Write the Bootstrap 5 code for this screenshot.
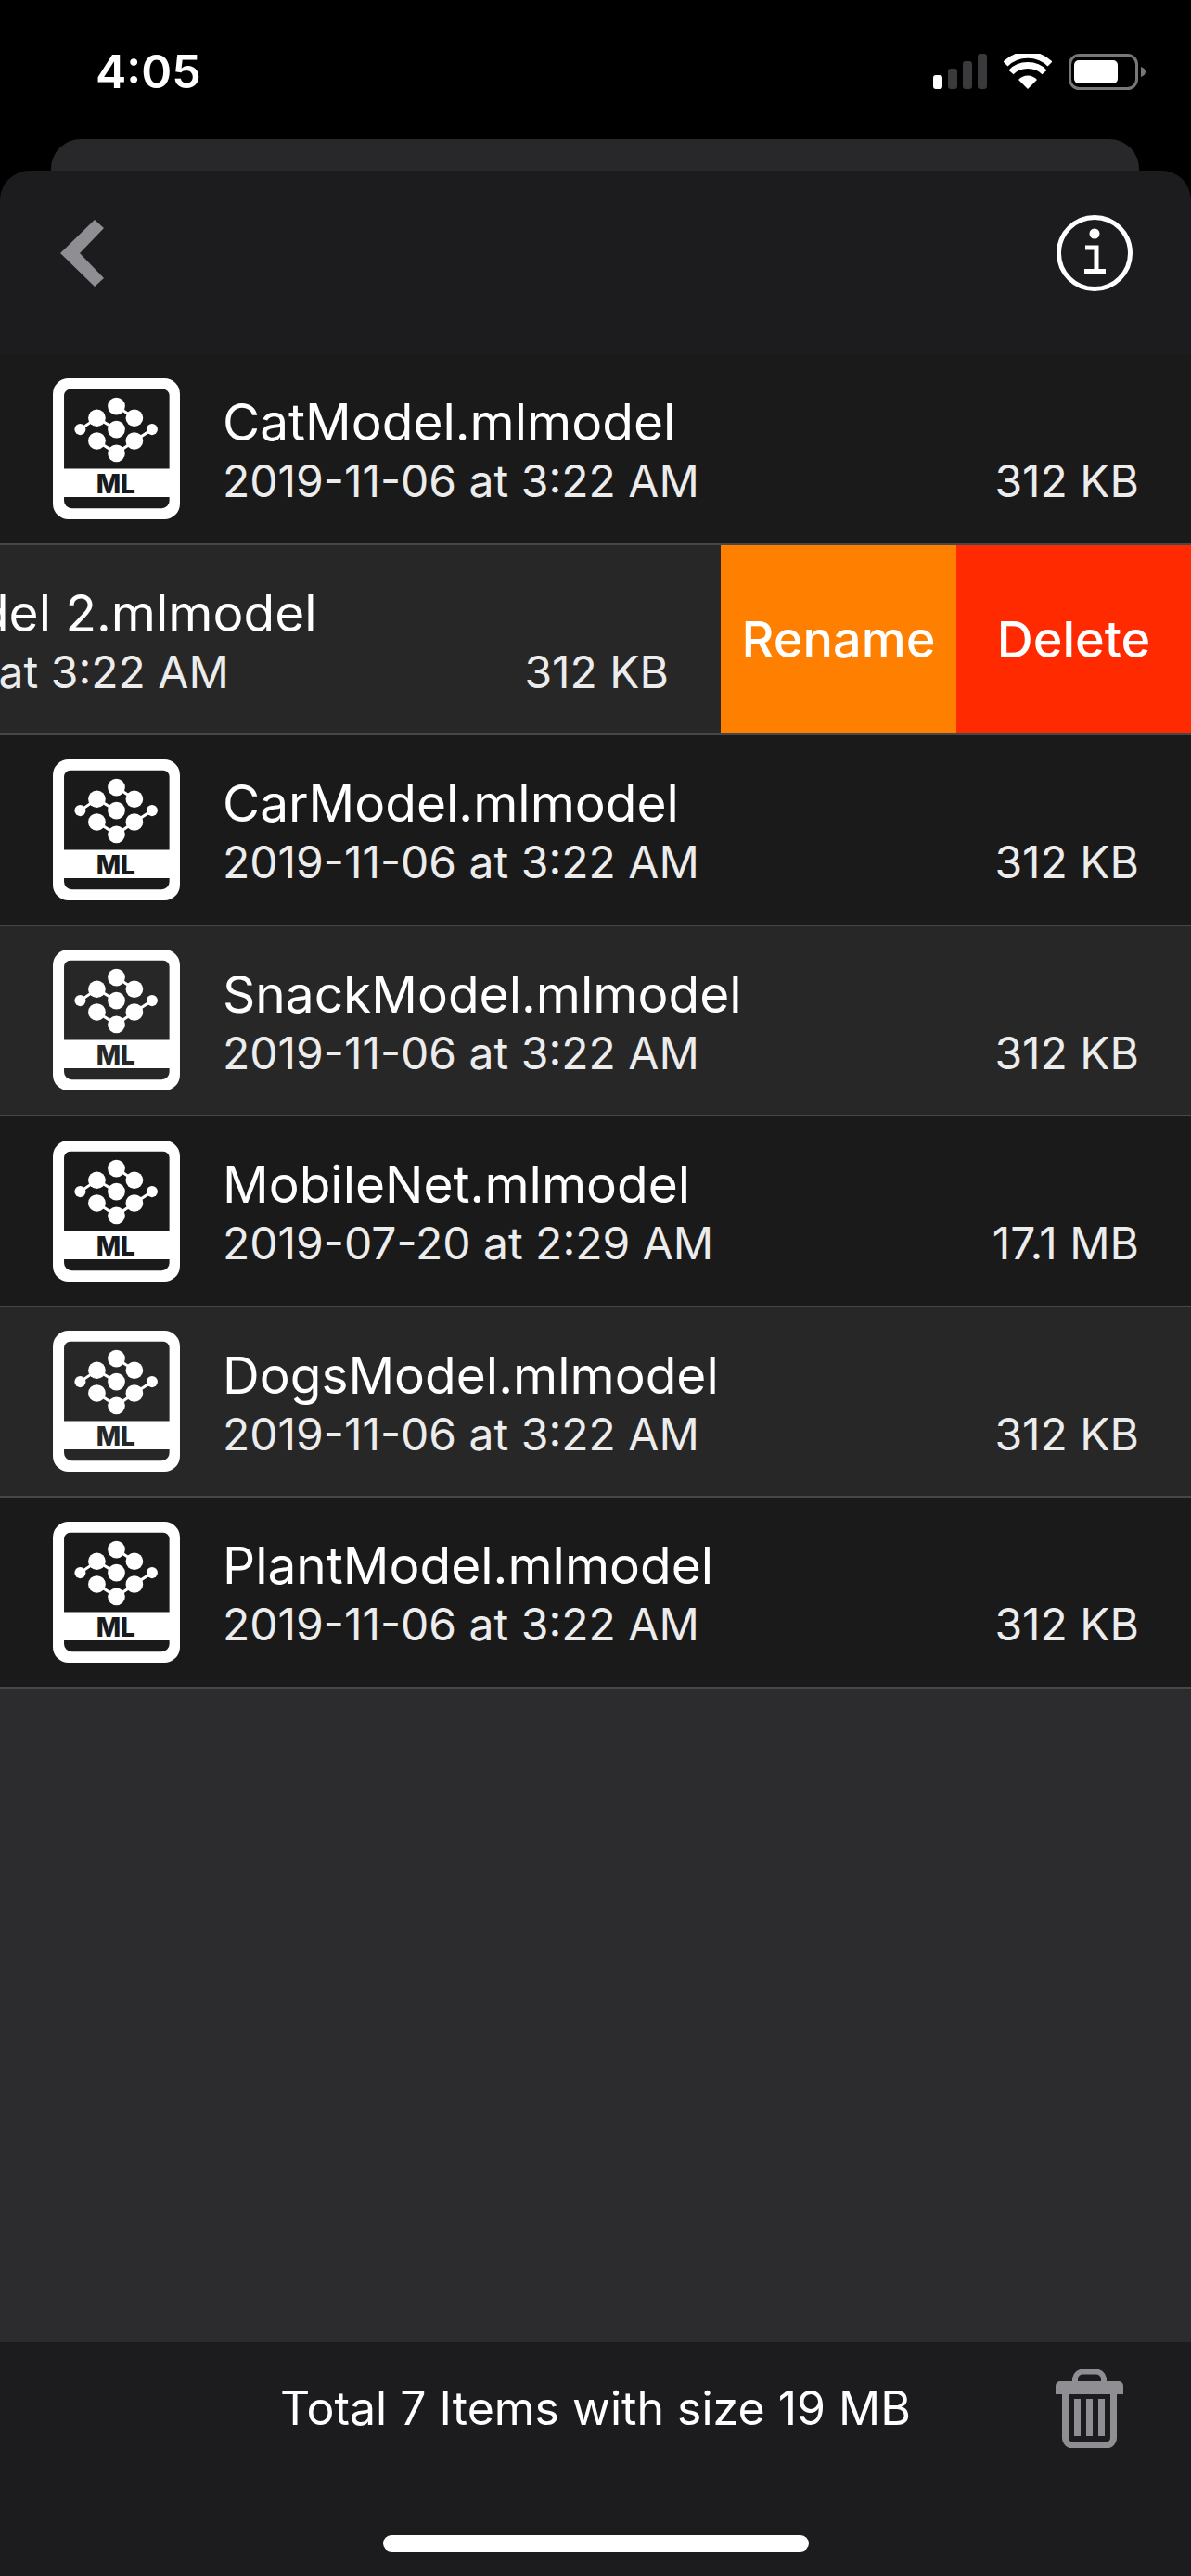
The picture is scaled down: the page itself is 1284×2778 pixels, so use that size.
<!DOCTYPE html>
<html lang="en">
<head>
  <meta charset="UTF-8" />
  <meta name="viewport" content="width=device-width, initial-scale=1.0"/>
  <title>Models</title>
  <link href="https://cdn.jsdelivr.net/npm/bootstrap@5.3.2/dist/css/bootstrap.min.css" rel="stylesheet">
  <style>
    html, body {
      height: 2778px;
      background: #000;
      color: #fff;
      font-family: Inter, "Liberation Sans", sans-serif;
      overflow: hidden;
    }
    .page-wrap { height: 2778px; }
    .status-row { height: 150px; padding: 58px 49px 0 103px; }
    .clock { font-size: 50px; font-weight: 600; line-height: 39px; }
    .status-icons { gap: 18px; }
    .back-sheet {
      height: 34px;
      margin: 0 56px 0 55px;
      background: #28282a;
      border-radius: 32px 32px 0 0;
    }
    .front-sheet { background: #1c1c1e; border-radius: 32px 32px 0 0; min-height: 0; }
    .sheet-head { height: 198px; padding: 0 62px 20px 65px; }
    .model-list { background: #2c2c2e; }
    .model-row {
      --row-bg: #1a1a1a;
      height: 205.5px;
      background: var(--row-bg);
      border-bottom: 2px solid #47474a;
      overflow: hidden;
    }
    .model-row.alt-row { --row-bg: #272727; }
    .row-main {
      width: 1284px;
      flex: none;
      padding: 0 56px 0 57px;
      gap: 46px;
    }
    .row-main.swiped { margin-left: -507px; }
    .ml-icon { width: 137px; height: 152px; flex: none; color: #fff; }
    .model-name { font-size: 55px; line-height: 61px; margin-top: 7px; }
    .model-meta { font-size: 48px; line-height: 61px; margin-top: 2px; color: #ececec; }
    .row-action {
      width: 254px;
      flex: none;
      font-size: 54px;
      font-weight: 500;
      color: #fff;
      border: 0;
      border-radius: 0;
      padding: 0;
    }
    .act-rename { background: #ff8000; }
    .act-delete { background: #ff2a00; width: 253px; }
    .foot-bar { height: 252px; padding-top: 29px; background: #1c1c1e; }
    .foot-row { display: grid; grid-template-columns: 1fr auto 1fr; height: 85px; padding-right: 73px; padding-left: 73px; }
    .foot-text { font-size: 50px; line-height: 85px; white-space: nowrap; }
    .home-bar { width: 459px; height: 18px; margin: 94px auto 0; border-radius: 9px; background: #fff; }
  </style>
</head>
<body>

  <svg width="0" height="0" class="position-absolute">
    <symbol id="mlGlyph" viewBox="0 0 410 455">
      <path fill="currentColor" fill-rule="evenodd" d="M50 0H360A50 50 0 0 1 410 50V405A50 50 0 0 1 360 455H50A50 50 0 0 1 0 405V50A50 50 0 0 1 50 0ZM56 35A20 20 0 0 0 36 55V292H376V55A20 20 0 0 0 356 35ZM36 383V395A25 25 0 0 0 61 420H351A25 25 0 0 0 376 395V383Z"/>
      <g fill="currentColor" stroke="none">
        <circle cx="205" cy="90" r="28"/>
        <circle cx="263" cy="128" r="28"/>
        <circle cx="142" cy="128" r="28"/>
        <circle cx="205" cy="165" r="28"/>
        <circle cx="142" cy="202" r="28"/>
        <circle cx="263" cy="202" r="28"/>
        <circle cx="205" cy="242" r="28"/>
        <circle cx="88" cy="165" r="18"/>
        <circle cx="320" cy="165" r="18"/>
      </g>
      <path fill="none" stroke="currentColor" stroke-width="9" d="M88 165 142 128 205 165M205 90 263 128M142 202 205 242 263 202 320 165"/>
      <text x="203" y="370" text-anchor="middle" font-family="Inter, 'Liberation Sans', sans-serif" font-size="84" font-weight="800" style="fill: var(--row-bg)">ML</text>
    </symbol>
  </svg>

  <div class="page-wrap d-flex flex-column">
    <div class="status-row d-flex justify-content-between align-items-start flex-shrink-0">
      <div class="clock">4:05</div>
      <div class="status-icons d-flex align-items-start">
        <svg width="58" height="38" viewBox="0 0 58 38">
          <rect x="0" y="23" width="10" height="15" rx="3" fill="#fff"/>
          <rect x="16" y="16" width="10" height="22" rx="3" fill="#3a3a3c"/>
          <rect x="32" y="8" width="10" height="30" rx="3" fill="#3a3a3c"/>
          <rect x="48" y="0" width="10" height="38" rx="3" fill="#3a3a3c"/>
        </svg>
        <svg width="52" height="38" viewBox="0 0 52 38">
          <path d="M26 38 16 28C21 22 31 22 36 28Z" fill="#fff"/>
          <path d="M8 20C17 10 35 10 44 20" fill="none" stroke="#fff" stroke-width="7"/>
          <path d="M2 11C15 -2 37 -2 50 11" fill="none" stroke="#fff" stroke-width="7"/>
        </svg>
        <svg width="83" height="39" viewBox="0 0 83 39">
          <rect x="1.5" y="1.5" width="72" height="36" rx="10" fill="none" stroke="#77777a" stroke-width="3"/>
          <rect x="6" y="7" width="47" height="25" rx="5" fill="#fff"/>
          <path d="M78 14C81 15 83 17 83 19.500C83 22 81 24 78 25Z" fill="#77777a"/>
        </svg>
      </div>
    </div>

    <div class="back-sheet flex-shrink-0"></div>

    <div class="front-sheet d-flex flex-column flex-grow-1">
      <div class="sheet-head d-flex justify-content-between align-items-center flex-shrink-0">
        <svg width="47" height="72" viewBox="0 0 47 72">
          <polygon points="37,0 47,9 21,36 47,63 37,72 0,36" fill="#8e8e93"/>
        </svg>
        <svg width="84" height="84" viewBox="0 0 84 84">
          <circle cx="42" cy="42" r="38.500" fill="none" stroke="#fff" stroke-width="5"/>
          <circle cx="42" cy="21" r="5.500" fill="#fff"/>
          <path d="M32 36H44V61M31 61.500H54" fill="none" stroke="#fff" stroke-width="5"/>
        </svg>
      </div>

      <div id="modelList" class="model-list list-group list-group-flush rounded-0 flex-grow-1"></div>

      <div class="foot-bar flex-shrink-0">
        <div class="foot-row">
          <span></span>
          <div class="foot-text">Total 7 Items with size 19 MB</div>
          <svg class="ms-auto" width="73" height="85" viewBox="0 0 73 85">
            <path d="M21 14V10A9 9 0 0 1 30 2.500H43A9 9 0 0 1 52 10V14" fill="none" stroke="#8e8e93" stroke-width="6"/>
            <path d="M5 13H68A5 5 0 0 1 73 18V27H0V18A5 5 0 0 1 5 13Z" fill="#8e8e93"/>
            <path d="M10.500 26V74A8 8 0 0 0 18.500 82H54.500A8 8 0 0 0 62.500 74V26" fill="none" stroke="#8e8e93" stroke-width="7"/>
            <rect x="20" y="32" width="7" height="40" fill="#8e8e93"/>
            <rect x="33" y="32" width="7" height="40" fill="#8e8e93"/>
            <rect x="46" y="32" width="7" height="40" fill="#8e8e93"/>
          </svg>
        </div>
        <div class="home-bar"></div>
      </div>
    </div>
  </div>

  <script src="https://cdn.jsdelivr.net/npm/bootstrap@5.3.2/dist/js/bootstrap.bundle.min.js"></script>
  <script>
    const models = [
      { name: 'CatModel.mlmodel', date: '2019-11-06 at 3:22 AM', size: '312 KB' },
      { name: 'SnackModel 2.mlmodel', date: '2019-11-06 at 3:22 AM', size: '312 KB', swiped: true },
      { name: 'CarModel.mlmodel', date: '2019-11-06 at 3:22 AM', size: '312 KB' },
      { name: 'SnackModel.mlmodel', date: '2019-11-06 at 3:22 AM', size: '312 KB' },
      { name: 'MobileNet.mlmodel', date: '2019-07-20 at 2:29 AM', size: '17.1 MB' },
      { name: 'DogsModel.mlmodel', date: '2019-11-06 at 3:22 AM', size: '312 KB' },
      { name: 'PlantModel.mlmodel', date: '2019-11-06 at 3:22 AM', size: '312 KB' }
    ];

    document.getElementById('modelList').innerHTML = models.map((m, i) => `
      <div class="model-row d-flex flex-shrink-0 ${i % 2 ? 'alt-row' : ''}">
        <div class="row-main d-flex align-items-center ${m.swiped ? 'swiped' : ''}">
          <svg class="ml-icon"><use href="#mlGlyph"/></svg>
          <div class="flex-grow-1">
            <div class="model-name">${m.name}</div>
            <div class="model-meta d-flex justify-content-between">
              <span>${m.date}</span><span>${m.size}</span>
            </div>
          </div>
        </div>
        ${m.swiped ? `
          <button class="row-action act-rename btn">Rename</button>
          <button class="row-action act-delete btn">Delete</button>` : ''}
      </div>`).join('');
  </script>

</body>
</html>
